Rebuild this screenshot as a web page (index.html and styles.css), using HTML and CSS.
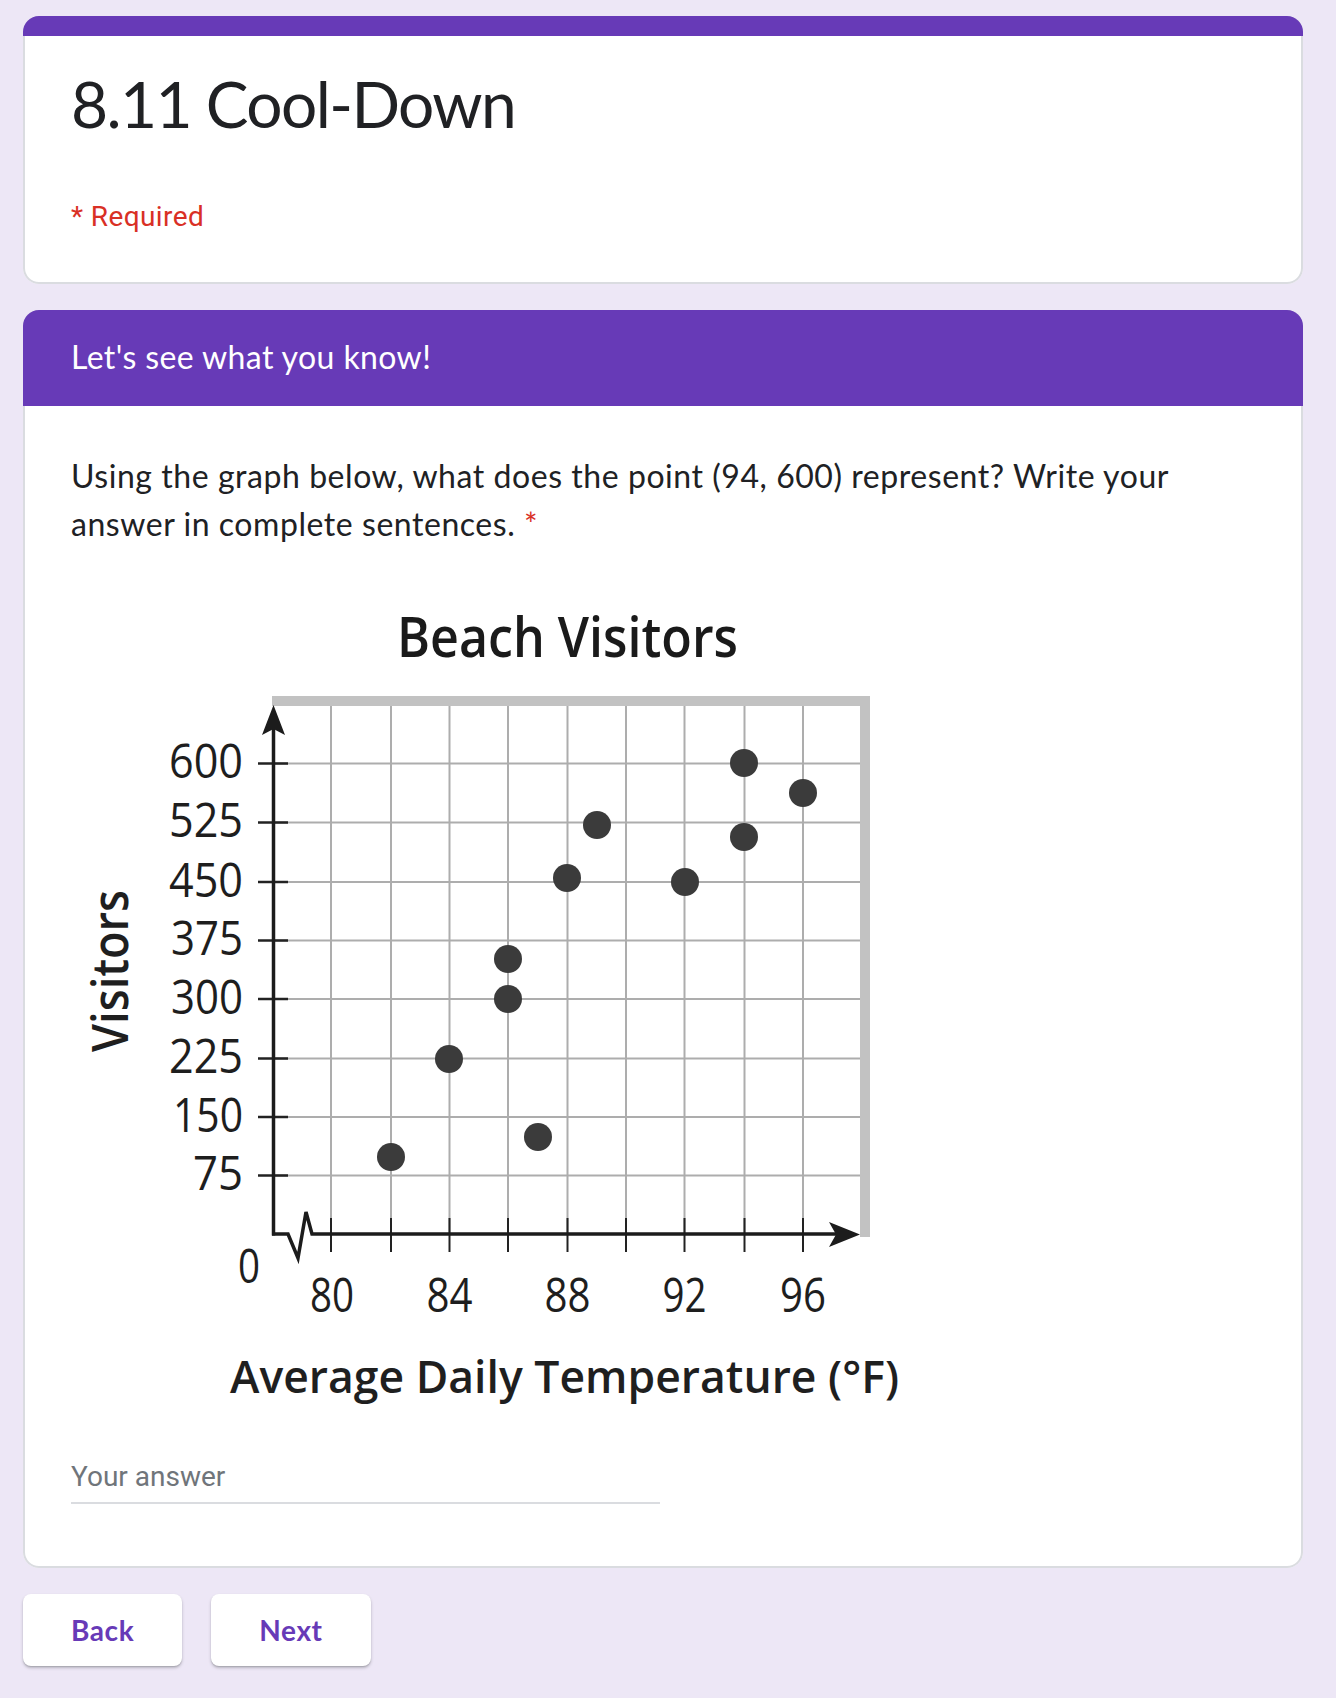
FILE: index.html
```html
<!DOCTYPE html>
<html lang="en">
<head>
<meta charset="utf-8">
<title>8.11 Cool-Down</title>
<link rel="stylesheet" href="styles.css">
</head>
<body>
<div class="form">
  <div class="card title-card">
    <div class="accent"></div>
    <div class="title-body">
      <h1 class="form-title">8.11 Cool-Down</h1>
      <div class="required">* Required</div>
    </div>
  </div>

  <div class="card section-card">
    <div class="section-header">Let's see what you know!</div>
    <div class="question">
      <div class="q-title">Using the graph below, what does the point (94, 600) represent? Write your answer in complete sentences. <span class="star">*</span></div>
      <svg class="chart" width="840" height="909" viewBox="71 548 840 909" xmlns="http://www.w3.org/2000/svg">
        <text class="c-title" x="397" y="657" textLength="341" lengthAdjust="spacingAndGlyphs">Beach Visitors</text>
        <!-- frame -->
        <rect x="272" y="696" width="598" height="10" fill="#c2c2c2"/>
        <rect x="860" y="696" width="10" height="541" fill="#c2c2c2"/>
        <!-- grid -->
        <g stroke="#adadad" stroke-width="2">
          <line x1="331" y1="706" x2="331" y2="1234"/>
          <line x1="391" y1="706" x2="391" y2="1234"/>
          <line x1="449.5" y1="706" x2="449.5" y2="1234"/>
          <line x1="508" y1="706" x2="508" y2="1234"/>
          <line x1="567.5" y1="706" x2="567.5" y2="1234"/>
          <line x1="626" y1="706" x2="626" y2="1234"/>
          <line x1="684.5" y1="706" x2="684.5" y2="1234"/>
          <line x1="744.5" y1="706" x2="744.5" y2="1234"/>
          <line x1="803" y1="706" x2="803" y2="1234"/>
          <line x1="273" y1="763.5" x2="860" y2="763.5"/>
          <line x1="273" y1="822.5" x2="860" y2="822.5"/>
          <line x1="273" y1="882" x2="860" y2="882"/>
          <line x1="273" y1="940.5" x2="860" y2="940.5"/>
          <line x1="273" y1="999" x2="860" y2="999"/>
          <line x1="273" y1="1058.5" x2="860" y2="1058.5"/>
          <line x1="273" y1="1117" x2="860" y2="1117"/>
          <line x1="273" y1="1175.5" x2="860" y2="1175.5"/>
        </g>
        <!-- y ticks -->
        <g stroke="#222" stroke-width="2.5">
          <line x1="258" y1="763.5" x2="288" y2="763.5"/>
          <line x1="258" y1="822.5" x2="288" y2="822.5"/>
          <line x1="258" y1="882" x2="288" y2="882"/>
          <line x1="258" y1="940.5" x2="288" y2="940.5"/>
          <line x1="258" y1="999" x2="288" y2="999"/>
          <line x1="258" y1="1058.5" x2="288" y2="1058.5"/>
          <line x1="258" y1="1117" x2="288" y2="1117"/>
          <line x1="258" y1="1175.5" x2="288" y2="1175.5"/>
        </g>
        <!-- x ticks -->
        <g stroke="#222" stroke-width="2">
          <line x1="331" y1="1218" x2="331" y2="1252"/>
          <line x1="391" y1="1218" x2="391" y2="1252"/>
          <line x1="449.5" y1="1218" x2="449.5" y2="1252"/>
          <line x1="508" y1="1218" x2="508" y2="1252"/>
          <line x1="567.5" y1="1218" x2="567.5" y2="1252"/>
          <line x1="626" y1="1218" x2="626" y2="1252"/>
          <line x1="684.5" y1="1218" x2="684.5" y2="1252"/>
          <line x1="744.5" y1="1218" x2="744.5" y2="1252"/>
          <line x1="803" y1="1218" x2="803" y2="1252"/>
        </g>
        <!-- axes -->
        <line x1="273.5" y1="725" x2="273.5" y2="1235.5" stroke="#1c1c1c" stroke-width="3.5"/>
        <polygon points="273.5,705 285,735 273.5,729 262,735" fill="#1c1c1c"/>
        <polyline points="272,1234 288,1234 298,1258 306,1212 312,1234 838,1234" fill="none" stroke="#1c1c1c" stroke-width="3.5" stroke-linejoin="miter"/>
        <polygon points="860,1234.5 829,1222 836,1234.5 829,1247" fill="#1c1c1c"/>
        <!-- y labels -->
        <g class="c-num" text-anchor="end">
          <text x="243" y="778" textLength="74" lengthAdjust="spacingAndGlyphs">600</text>
          <text x="243" y="837" textLength="74" lengthAdjust="spacingAndGlyphs">525</text>
          <text x="243" y="896.5" textLength="74" lengthAdjust="spacingAndGlyphs">450</text>
          <text x="243" y="955" textLength="72" lengthAdjust="spacingAndGlyphs">375</text>
          <text x="243" y="1013.5" textLength="72" lengthAdjust="spacingAndGlyphs">300</text>
          <text x="243" y="1073" textLength="74" lengthAdjust="spacingAndGlyphs">225</text>
          <text x="243" y="1131.5" textLength="70" lengthAdjust="spacingAndGlyphs">150</text>
          <text x="243" y="1190" textLength="50" lengthAdjust="spacingAndGlyphs">75</text>
        </g>
        <!-- x labels -->
        <g class="c-num" text-anchor="middle">
          <text x="249" y="1283" textLength="22" lengthAdjust="spacingAndGlyphs">0</text>
          <text x="332" y="1312" textLength="44" lengthAdjust="spacingAndGlyphs">80</text>
          <text x="449.5" y="1312" textLength="46" lengthAdjust="spacingAndGlyphs">84</text>
          <text x="567.5" y="1312" textLength="46" lengthAdjust="spacingAndGlyphs">88</text>
          <text x="684.5" y="1312" textLength="44" lengthAdjust="spacingAndGlyphs">92</text>
          <text x="803" y="1312" textLength="46" lengthAdjust="spacingAndGlyphs">96</text>
        </g>
        <text class="c-axis" x="230" y="1393" textLength="669" lengthAdjust="spacingAndGlyphs">Average Daily Temperature (°F)</text>
        <text class="c-axis c-vert" transform="translate(128 1052) rotate(-90)" x="0" y="0" textLength="162" lengthAdjust="spacingAndGlyphs">Visitors</text>
        <!-- data -->
        <g fill="#3b3b3b">
          <circle cx="744" cy="763" r="14"/>
          <circle cx="803" cy="793" r="14"/>
          <circle cx="597" cy="825" r="14"/>
          <circle cx="744" cy="837" r="14"/>
          <circle cx="567" cy="878" r="14"/>
          <circle cx="685" cy="882" r="14"/>
          <circle cx="508" cy="959" r="14"/>
          <circle cx="508" cy="999" r="14"/>
          <circle cx="449" cy="1059" r="14"/>
          <circle cx="538" cy="1137" r="14"/>
          <circle cx="391" cy="1157" r="14"/>
        </g>
      </svg>
      <div class="answer"><span class="answer-placeholder">Your answer</span></div>
    </div>
  </div>

  <div class="nav">
    <button class="nav-btn" type="button">Back</button>
    <button class="nav-btn" type="button">Next</button>
  </div>
</div>
</body>
</html>
```
FILE: styles.css
```css
html, body {
  margin: 0;
  padding: 0;
  background: #ede7f6;
}

body {
  font-family: Lato, "Open Sans", sans-serif;
  color: #202124;
}

.form {
  width: 1280px;
  margin-left: 23px;
  padding-top: 16px;
  padding-bottom: 32px;
  display: flex;
  flex-direction: column;
}

.card {
  background: #fff;
  border-radius: 16px;
  overflow: hidden;
  box-shadow: inset 0 0 0 2px #dadce0;
}

.title-card {
  height: 268px;
  display: flex;
  flex-direction: column;
}

.accent {
  height: 20px;
  background: #673ab7;
  flex: none;
}

.title-body {
  padding: 29px 48px 0;
}

.form-title {
  margin: 0;
  font-family: Lato, sans-serif;
  font-weight: 400;
  font-size: 64px;
  line-height: 77px;
  letter-spacing: -1.6px;
  color: #202124;
}

.required {
  margin-top: 55px;
  font-family: Roboto, sans-serif;
  font-size: 28px;
  line-height: 40px;
  letter-spacing: 0.4px;
  color: #d93025;
}

.section-card {
  margin-top: 26px;
  height: 1258px;
}

.section-header {
  background: #673ab7;
  color: #fff;
  height: 96px;
  box-sizing: border-box;
  padding: 23px 48px 0;
  font-size: 32px;
  line-height: 48px;
  letter-spacing: 0.4px;
}

.question {
  padding: 46px 48px 0;
}

.q-title {
  font-size: 32px;
  line-height: 48px;
  letter-spacing: 0.55px;
  color: #202124;
}

.star {
  color: #d93025;
}

.chart {
  display: block;
  font-family: "Open Sans", sans-serif;
}

.c-title {
  font-size: 56px;
  font-weight: 600;
  fill: #1a1a1a;
}

.c-num {
  font-size: 48px;
  fill: #1e1e1e;
}

.c-axis {
  font-size: 46px;
  font-weight: 600;
  fill: #1f1f1f;
}

.c-vert {
  font-size: 50px;
}

.answer {
  width: 589px;
  border-bottom: 2px solid #dadce0;
  padding-bottom: 5px;
}

.answer-placeholder {
  display: block;
  font-family: Roboto, sans-serif;
  font-size: 28px;
  line-height: 40px;
  color: #70757a;
}

.nav {
  display: flex;
  gap: 29px;
  margin-top: 26px;
}

.nav-btn {
  height: 72px;
  padding: 0 48px;
  border: none;
  border-radius: 8px;
  background: #fff;
  box-shadow: 0 2px 3px rgba(60, 64, 67, 0.3), 0 1px 1px rgba(60, 64, 67, 0.15);
  font-family: Lato, sans-serif;
  font-weight: 700;
  font-size: 28px;
  letter-spacing: 0.6px;
  color: #673ab7;
  cursor: pointer;
}
```
